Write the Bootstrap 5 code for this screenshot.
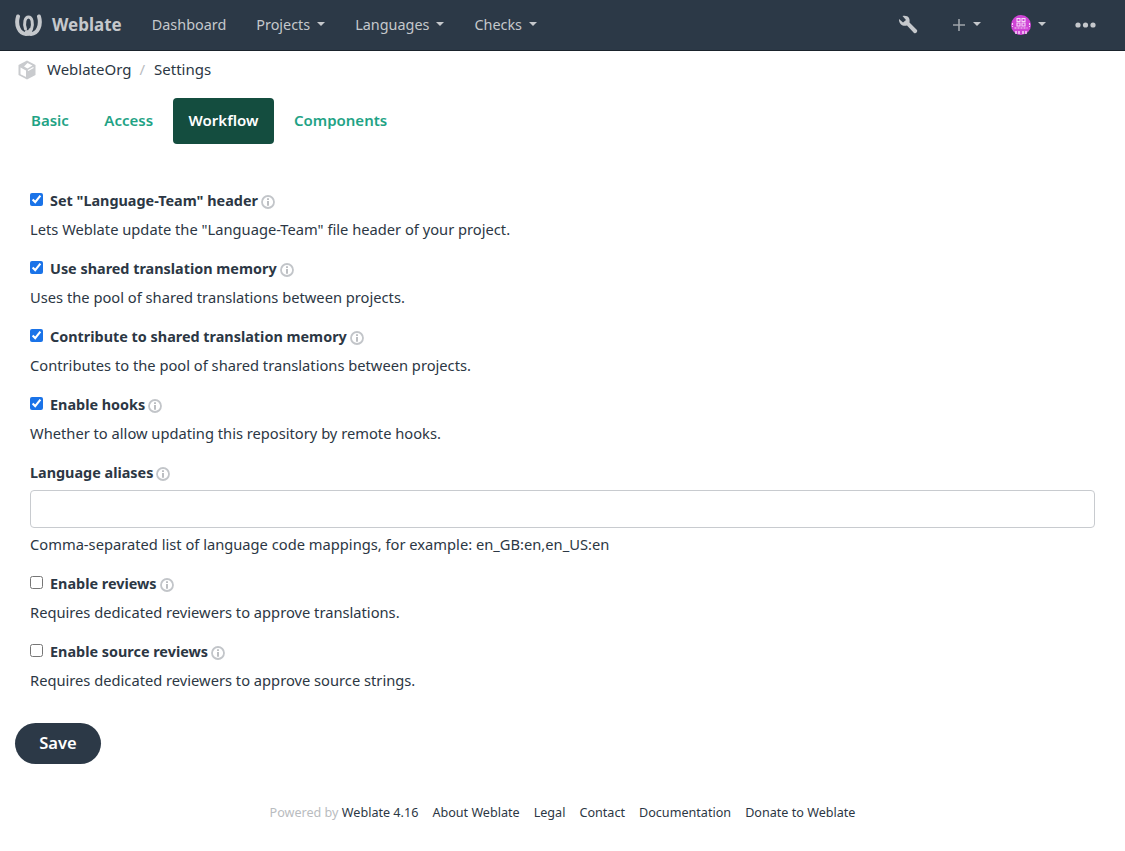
<!DOCTYPE html>
<html lang="en">
<head>
  <meta charset="UTF-8" />
  <title>Settings</title>
  <link href="https://cdn.jsdelivr.net/npm/bootstrap@5.3.0/dist/css/bootstrap.min.css" rel="stylesheet" />
  <style>
    body { font-family: "Noto Sans", "Liberation Sans", sans-serif; font-size: 14.7px; color: #2c3744; }
    .top-bar { background: #2c3947; height: 51px; border-bottom: 1px solid #1a232c; padding: 0 29px 0 15px; }
    .top-bar .nav-link { color: #c5c8cc; font-size: 14.4px; padding: 0; }
    .top-bar .dropdown-toggle::after { color: #c5c8cc; font-size: 16px; margin-left: 7px; }
    .brand-name { color: #c5c8cc; font-weight: 700; font-size: 17px; margin-left: 10px; margin-right: 30px; }
    .main-links { gap: 30px; }
    .tool-plus { margin-left: 34px; margin-right: 0; }
    .tool-avatar { margin-left: 30px; margin-right: 0; }
    .tool-dots { margin-left: 29px; }
    .crumbs { height: 37px; padding-left: 17px; font-size: 15px; }
    .crumbs svg { margin-right: 10px; }
    .crumbs a { color: #2c3744; text-decoration: none; }
    .crumbs .sep { color: #b9bcc0; margin: 0 9px 0 8px; }
    .tab-row { padding: 10px 15px 0; gap: 3.5px; }
    .tab-row .nav-link { color: #1fa385; font-weight: 600; font-size: 15px; padding: 0 16px; height: 46px; line-height: 44px; border-radius: 4px; }
    .tab-row .nav-link.active { background: #144d3f; color: #fff; }
    .settings-form { padding: 47px 30px 0; }
    .field-block { margin-bottom: 19px; }
    .field-head { display: flex; align-items: center; height: 20px; font-weight: 700; font-size: 14.4px; }
    .field-head input { width: 13px; height: 13px; margin: -3px 7px 0 0; accent-color: #1a73e8; }
    .field-note { margin-top: 7px; line-height: 22px; }
    .info-mark { width: 14px; height: 14px; margin: 2px 0 0 3px; flex: none; }
    .alias-input { height: 38px; border: 1px solid #c8cbcf; border-radius: 4px; margin-top: 7px; }
    .alias-input + .field-note { margin-top: 5px; }
    .save-btn { background: #2c3947; color: #fff; font-weight: 600; font-size: 16.5px; border: 0; border-radius: 21px; width: 86px; height: 41px; margin: 13px 0 0 15px; }
    .foot-links { margin-top: 40px; font-size: 12.6px; gap: 14px; }
    .foot-links a { color: #2c3744; text-decoration: none; }
    .foot-links .faint { color: #b9bcc0; }
  </style>
</head>
<body>
  <svg width="0" height="0" class="d-block">
    <symbol id="info" viewBox="0 0 14 14"><circle cx="7" cy="7" r="6" fill="none" stroke="#c2c5c9" stroke-width="1.800"/><path d="M6.100 3.200H7.900V4.900H6.100ZM6.100 5.900H7.900V10.800H6.100Z" fill="#b5b8bc"/></symbol>
  </svg>

  <nav class="top-bar d-flex align-items-center">
    <svg width="27" height="22" viewBox="0 0 27 22"><g fill="none" stroke="#c5c8cc" stroke-linecap="round"><path d="M3 2.500C.5 11 4 19.500 11 20C13.500 20 15 18 15.500 16" stroke-width="4"/><path d="M24 2.500C26.500 11 23 19.500 16 20C14 20 13 19 12 18" stroke-width="4"/><path d="M10.500 15C8.500 9 10 3 13.500 3C17 3 18.500 9 16.500 15" stroke-width="3"/></g></svg>
    <span class="brand-name">Weblate</span>
    <div class="d-flex main-links">
      <a class="nav-link" href="#">Dashboard</a>
      <a class="nav-link dropdown-toggle" href="#">Projects</a>
      <a class="nav-link dropdown-toggle" href="#">Languages</a>
      <a class="nav-link dropdown-toggle" href="#">Checks</a>
    </div>
    <div class="d-flex align-items-center ms-auto">
      <svg width="20" height="20" viewBox="0 0 20 20"><path d="M1 4L5 7.500L8 5L4.500 1C7 .2 10 1 11 3C12 5 11.500 6.500 11.500 7.500L19 15C20 16.500 18 19 16 18L9 10.500C7 11 4.500 11 3 9.500C1.500 8 .8 6 1 4Z" fill="#c5c8cc"/></svg>
      <svg width="14" height="14" viewBox="0 0 14 14" class="tool-plus"><path d="M6.200 1H7.800V6.200H13V7.800H7.800V13H6.200V7.800H1V6.200H6.200Z" fill="#9ea4aa"/></svg>
      <a class="nav-link dropdown-toggle" href="#"></a>
      <svg width="20" height="20" viewBox="0 0 20 20" class="tool-avatar"><circle cx="10" cy="10" r="10" fill="#cf45d6"/><g fill="none" stroke="#f6d9f7" stroke-width="1.100"><path d="M6 3.500H9V6.500H6ZM11 3.500H14V6.500H11ZM6 8H9V11H6ZM11 8H14V11H11Z"/><path d="M1.500 8V12M18.500 8V12M3.500 13H16.500" stroke-dasharray="2 1"/><path d="M5 16V19M8 16V19M12 16V19M15 16V19" stroke-width="1.500"/></g></svg>
      <a class="nav-link dropdown-toggle" href="#"></a>
      <svg width="21" height="6" viewBox="0 0 21 6" class="tool-dots"><circle cx="3" cy="3" r="2.600" fill="#c5c8cc"/><circle cx="10.500" cy="3" r="2.600" fill="#c5c8cc"/><circle cx="18" cy="3" r="2.600" fill="#c5c8cc"/></svg>
    </div>
  </nav>

  <div class="crumbs d-flex align-items-center">
    <svg width="20" height="20" viewBox="0 0 20 20"><path d="M10 .5L18.500 5V15L10 19.500L1.500 15V5Z" fill="#c9cbce"/><path d="M10.500 3L15.500 5.500L10.500 8.500L7 6.500ZM3.500 7.500L9 10.500V17L3.500 14.200Z" fill="#fff"/><path d="M11 10.500L16.500 7.500" stroke="#fff" stroke-width="1.200"/></svg>
    <a href="#">WeblateOrg</a><span class="sep">/</span><a href="#">Settings</a>
  </div>

  <ul class="nav tab-row">
    <li class="nav-item"><a class="nav-link" href="#">Basic</a></li>
    <li class="nav-item"><a class="nav-link" href="#">Access</a></li>
    <li class="nav-item"><a class="nav-link active" href="#">Workflow</a></li>
    <li class="nav-item"><a class="nav-link" href="#">Components</a></li>
  </ul>

  <form class="settings-form">
    <div class="field-block">
      <label class="field-head"><input type="checkbox" checked />Set "Language-Team" header<svg class="info-mark"><use href="#info"/></svg></label>
      <div class="field-note">Lets Weblate update the "Language-Team" file header of your project.</div>
    </div>
    <div class="field-block">
      <label class="field-head"><input type="checkbox" checked />Use shared translation memory<svg class="info-mark"><use href="#info"/></svg></label>
      <div class="field-note">Uses the pool of shared translations between projects.</div>
    </div>
    <div class="field-block">
      <label class="field-head"><input type="checkbox" checked />Contribute to shared translation memory<svg class="info-mark"><use href="#info"/></svg></label>
      <div class="field-note">Contributes to the pool of shared translations between projects.</div>
    </div>
    <div class="field-block">
      <label class="field-head"><input type="checkbox" checked />Enable hooks<svg class="info-mark"><use href="#info"/></svg></label>
      <div class="field-note">Whether to allow updating this repository by remote hooks.</div>
    </div>
    <div class="field-block">
      <label class="field-head">Language aliases<svg class="info-mark"><use href="#info"/></svg></label>
      <input type="text" class="form-control alias-input" />
      <div class="field-note">Comma-separated list of language code mappings, for example: en_GB:en,en_US:en</div>
    </div>
    <div class="field-block">
      <label class="field-head"><input type="checkbox" />Enable reviews<svg class="info-mark"><use href="#info"/></svg></label>
      <div class="field-note">Requires dedicated reviewers to approve translations.</div>
    </div>
    <div class="field-block">
      <label class="field-head"><input type="checkbox" />Enable source reviews<svg class="info-mark"><use href="#info"/></svg></label>
      <div class="field-note">Requires dedicated reviewers to approve source strings.</div>
    </div>
  </form>

  <button type="button" class="btn save-btn">Save</button>

  <footer class="foot-links d-flex justify-content-center">
    <span><span class="faint">Powered by</span> <a href="#">Weblate 4.16</a></span>
    <a href="#">About Weblate</a>
    <a href="#">Legal</a>
    <a href="#">Contact</a>
    <a href="#">Documentation</a>
    <a href="#">Donate to Weblate</a>
  </footer>
  <script src="https://cdn.jsdelivr.net/npm/bootstrap@5.3.0/dist/js/bootstrap.bundle.min.js"></script>
</body>
</html>
